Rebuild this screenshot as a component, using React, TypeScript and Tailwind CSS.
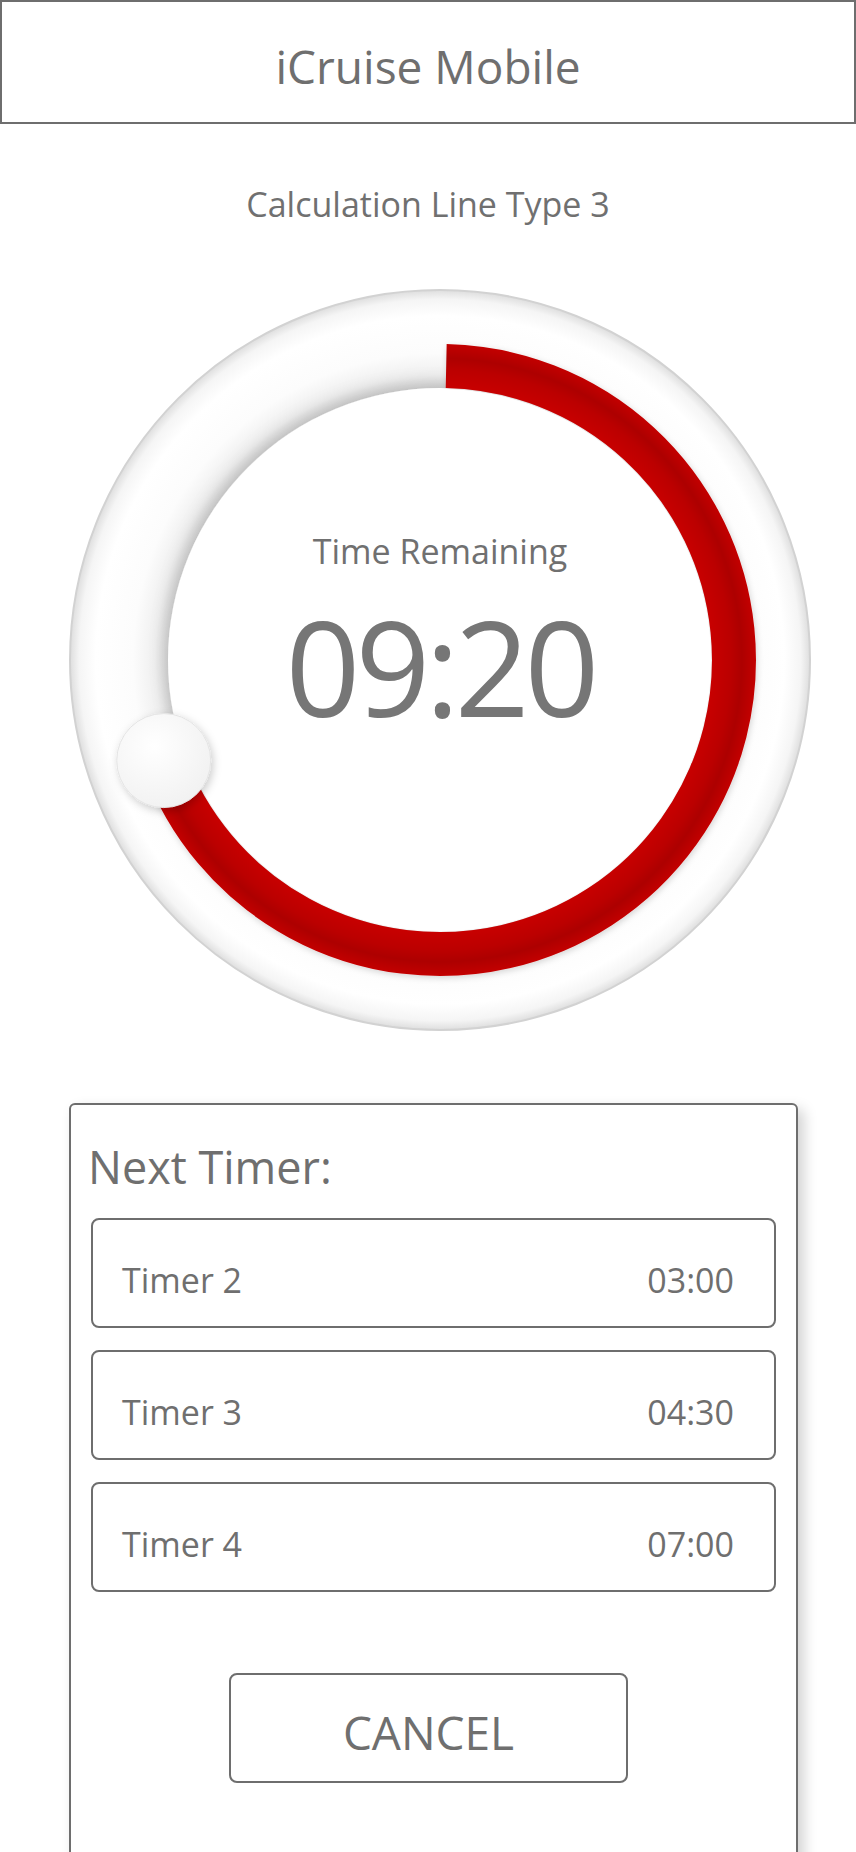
import React from "react";

const timers = [
  { name: "Timer 2", time: "03:00" },
  { name: "Timer 3", time: "04:30" },
  { name: "Timer 4", time: "07:00" },
];

// ring geometry, in svg units (744 x 744 box)
const C = 372;
const R = 294;
const START = 1.2;
const SWEEP = 250;

function pointAt(deg: number) {
  const a = (deg * Math.PI) / 180;
  return { x: C + R * Math.sin(a), y: C - R * Math.cos(a) };
}

function TimerRing() {
  const start = pointAt(START);
  const end = pointAt(SWEEP);
  const path = `M ${start.x.toFixed(1)} ${start.y.toFixed(1)} A ${R} ${R} 0 1 1 ${end.x.toFixed(1)} ${end.y.toFixed(1)}`;

  return (
    <div className="relative w-[744px] h-[744px] ml-[68px] mt-[64px]">
      <svg width="744" height="744" viewBox="0 0 744 744" className="block">
        <defs>
          <filter id="discShadow" x="-20%" y="-20%" width="140%" height="140%">
            <feDropShadow dx="-4" dy="-6" stdDeviation="8" floodColor="#000" floodOpacity="0.12" />
          </filter>
          <filter id="arcShadow" x="-20%" y="-20%" width="140%" height="140%">
            <feDropShadow dx="1" dy="2" stdDeviation="3" floodColor="#000" floodOpacity="0.16" />
          </filter>
          <filter id="knobShadow" x="-50%" y="-50%" width="200%" height="200%">
            <feDropShadow dx="2" dy="3" stdDeviation="4" floodColor="#000" floodOpacity="0.2" />
          </filter>
          <radialGradient id="track" cx={C} cy={C} r="370" gradientUnits="userSpaceOnUse">
            <stop offset="0.735" stopColor="#d9d9d9" />
            <stop offset="0.77" stopColor="#efefef" />
            <stop offset="0.83" stopColor="#fcfcfc" />
            <stop offset="0.93" stopColor="#ffffff" />
            <stop offset="0.975" stopColor="#f5f5f5" />
            <stop offset="1" stopColor="#dedede" />
          </radialGradient>
          <radialGradient id="redBand" cx={C} cy={C} r="316" gradientUnits="userSpaceOnUse">
            <stop offset="0.86" stopColor="#c80000" />
            <stop offset="0.92" stopColor="#bb0000" />
            <stop offset="0.955" stopColor="#ad0000" />
            <stop offset="1" stopColor="#c30000" />
          </radialGradient>
          <radialGradient id="knobFill" cx="0.4" cy="0.35" r="0.7">
            <stop offset="0" stopColor="#ffffff" />
            <stop offset="1" stopColor="#f1f1f1" />
          </radialGradient>
        </defs>
        <circle cx={C} cy={C} r="370" fill="url(#track)" stroke="#d2d2d2" strokeWidth="2" />
        <circle cx={C} cy={C} r="272" fill="#ffffff" filter="url(#discShadow)" />
        <path d={path} fill="none" stroke="url(#redBand)" strokeWidth="44" filter="url(#arcShadow)" />
        <circle cx={C} cy={C} r="271" fill="#ffffff" />
        <circle
          cx={end.x}
          cy={end.y}
          r="47"
          fill="url(#knobFill)"
          stroke="#e4e4e4"
          strokeWidth="1"
          filter="url(#knobShadow)"
        />
      </svg>
      <div className="absolute left-0 right-0 top-[246px] text-center text-[34px] leading-none text-[#707070]">
        Time Remaining
      </div>
      <div className="absolute left-0 right-0 top-[313px] text-center text-[131px] leading-none tracking-[-5px] text-[#767676]">
        09:20
      </div>
    </div>
  );
}

export default function App() {
  return (
    <div
      className="w-[856px] h-[1852px] overflow-hidden bg-white"
      style={{ fontFamily: '"Open Sans", "Noto Sans", sans-serif' }}
    >
      <header className="h-[124px] border-2 border-[#6e6e6e] flex items-center justify-center pt-2">
        <h1 className="text-[46px] leading-[52px] text-[#6f6f6f] font-normal">iCruise Mobile</h1>
      </header>

      <p className="mt-[60px] text-center text-[34px] leading-[40px] text-[#707070]">
        Calculation Line Type 3
      </p>

      <TimerRing />

      <section className="mt-[71px] ml-[69px] w-[729px] h-[800px] border-2 border-[#6e6e6e] rounded-[6px] bg-white px-[20px] pt-[36px] shadow-[6px_6px_14px_rgba(0,0,0,0.18)]">
        <h2 className="-ml-[3px] text-[45px] leading-[52px] text-[#6f6f6f] font-normal">Next Timer:</h2>

        <div className="mt-[25px] flex flex-col gap-[22px]">
          {timers.map((t) => (
            <div
              key={t.name}
              className="h-[110px] border-2 border-[#6e6e6e] rounded-[8px] flex items-center justify-between pl-[29px] pr-[40px] pt-[14px] text-[34px] leading-[40px] text-[#6f6f6f]"
            >
              <span>{t.name}</span>
              <span>{t.time}</span>
            </div>
          ))}
        </div>

        <button
          type="button"
          className="mt-[81px] ml-[138px] w-[399px] h-[110px] border-2 border-[#6e6e6e] rounded-[8px] flex items-center justify-center pt-[7px] text-[46px] leading-[52px] text-[#6f6f6f] bg-white"
        >
          CANCEL
        </button>
      </section>
    </div>
  );
}
